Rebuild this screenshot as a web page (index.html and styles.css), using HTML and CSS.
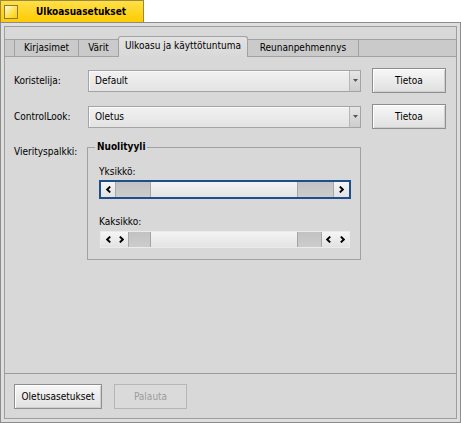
FILE: index.html
```html
<!DOCTYPE html>
<html lang="fi">
<head>
<meta charset="utf-8">
<title>Ulkoasuasetukset</title>
<link rel="stylesheet" href="styles.css">
</head>
<body>
<div class="window">
  <div class="titletab">
    <span class="closebox"></span>
    <span class="title">Ulkoasuasetukset</span>
  </div>
  <div class="frame">
    <div class="content">
      <div class="tabview">
        <div class="tabbar">
          <div class="stub"></div>
          <div class="tab w1">Kirjasimet</div>
          <div class="tab w2">Värit</div>
          <div class="tab sel w3">Ulkoasu ja käyttötuntuma</div>
          <div class="tab w4">Reunanpehmennys</div>
          <div class="fill"></div>
        </div>
        <div class="panel">
          <div class="form">
            <span class="lbl">Koristelija:</span>
            <div class="dropdown">
              <span class="value">Default</span>
              <span class="ddarrow"><svg width="5" height="3" viewBox="0 0 5 3"><path d="M0 0H5L2.5 3Z" fill="#555"/></svg></span>
            </div>
            <button class="btn info">Tietoa</button>

            <span class="lbl">ControlLook:</span>
            <div class="dropdown">
              <span class="value">Oletus</span>
              <span class="ddarrow"><svg width="5" height="3" viewBox="0 0 5 3"><path d="M0 0H5L2.5 3Z" fill="#555"/></svg></span>
            </div>
            <button class="btn info">Tietoa</button>

            <span class="lbl top">Vierityspalkki:</span>
            <fieldset class="group">
              <legend>Nuolityyli</legend>
              <div class="sblabel">Yksikkö:</div>
              <div class="sbwrap focus">
                <div class="scrollbar">
                  <span class="arrow a15 rb"><svg width="5" height="7" viewBox="0 0 5 7"><path d="M4.2 0.6 1.2 3.5 4.2 6.4" fill="none" stroke="#000" stroke-width="1.9"/></svg></span>
                  <span class="trough t34"></span>
                  <span class="thumb"></span>
                  <span class="trough grow"></span>
                  <span class="arrow a16 lb"><svg width="5" height="7" viewBox="0 0 5 7"><path d="M0.8 0.6 3.8 3.5 0.8 6.4" fill="none" stroke="#000" stroke-width="1.9"/></svg></span>
                </div>
              </div>
              <div class="sblabel second">Kaksikko:</div>
              <div class="sbwrap plain">
                <div class="scrollbar">
                  <span class="arrow a14"><svg width="5" height="7" viewBox="0 0 5 7"><path d="M4.2 0.6 1.2 3.5 4.2 6.4" fill="none" stroke="#000" stroke-width="1.9"/></svg></span>
                  <span class="arrow a14 rb"><svg width="5" height="7" viewBox="0 0 5 7"><path d="M0.8 0.6 3.8 3.5 0.8 6.4" fill="none" stroke="#000" stroke-width="1.9"/></svg></span>
                  <span class="trough t21"></span>
                  <span class="thumb"></span>
                  <span class="trough grow"></span>
                  <span class="arrow a14 lb"><svg width="5" height="7" viewBox="0 0 5 7"><path d="M4.2 0.6 1.2 3.5 4.2 6.4" fill="none" stroke="#000" stroke-width="1.9"/></svg></span>
                  <span class="arrow a14"><svg width="5" height="7" viewBox="0 0 5 7"><path d="M0.8 0.6 3.8 3.5 0.8 6.4" fill="none" stroke="#000" stroke-width="1.9"/></svg></span>
                </div>
              </div>
            </fieldset>
          </div>
        </div>
      </div>
      <div class="footer">
        <button class="btn wide">Oletusasetukset</button>
        <button class="btn revert" disabled>Palauta</button>
      </div>
    </div>
  </div>
</div>
</body>
</html>
```
FILE: styles.css
```css
* { box-sizing: border-box; }

body {
  margin: 0;
  background: #ffffff;
  font-family: "DejaVu Sans Condensed", "DejaVu Sans", sans-serif;
  font-stretch: condensed;
  font-size: 10px;
  color: #000;
}

.window {
  width: 461px;
}

/* Title tab */
.titletab {
  width: 144px;
  height: 22px;
  display: flex;
  align-items: center;
  border: 1px solid #9c8a3c;
  border-bottom: none;
  background: linear-gradient(#ffe04a, #ffcb00);
}

.closebox {
  width: 14px;
  height: 14px;
  margin-left: 3px;
  border: 1px solid #8f7c34;
  background: linear-gradient(135deg, #fffbe6 0%, #ffe566 45%, #ffcb00 100%);
}

.title {
  margin-left: 18px;
  font-weight: bold;
  white-space: nowrap;
}

/* Window frame */
.frame {
  border: 1px solid #8c8c8c;
  background: #dedede;
  padding: 3px;
}

.content {
  height: 393px;
  border: 1px solid #9e9e9e;
  background: #d8d8d8;
  display: flex;
  flex-direction: column;
}

/* Tab view */
.tabview {
  flex: 1;
  display: flex;
  flex-direction: column;
  padding-top: 9px;
}

.tabbar {
  display: flex;
  align-items: flex-end;
  height: 21px;
}

.stub, .tab, .fill {
  height: 18px;
  border-top: 1px solid #a2a2a2;
  border-bottom: 1px solid #a2a2a2;
  background: #cacaca;
}

.stub { width: 9px; }
.fill { flex: 1; border-left: 1px solid #a2a2a2; }

.tab {
  border-left: 1px solid #a2a2a2;
  text-align: center;
  line-height: 15px;
  white-space: nowrap;
}

.tab.sel {
  height: 21px;
  border: 1px solid #a2a2a2;
  border-bottom: none;
  border-radius: 3px 3px 0 0;
  background: linear-gradient(#e2e2e2, #d8d8d8);
  line-height: 17px;
}

.sel + .tab { border-left: none; }

.w1 { width: 64px; }
.w2 { width: 40px; }
.w3 { width: 130px; }
.w4 { width: 110px; }

.panel {
  flex: 1;
  padding: 11px 0 0 9px;
}

.form {
  display: grid;
  grid-template-columns: 74px 273px 85px;
  row-gap: 11px;
  align-items: center;
}

.lbl {
  line-height: 14px;
  white-space: nowrap;
}

.lbl.top {
  align-self: start;
  margin-top: 5px;
}

.dropdown {
  height: 22px;
  display: flex;
  align-items: center;
  border: 1px solid #a4a4a4;
  background: linear-gradient(#f1f1f1, #e3e3e3);
  box-shadow: inset 1px 1px 0 #fafafa;
}

.dropdown .value {
  flex: 1;
  padding-left: 6px;
}

.ddarrow {
  width: 11px;
  align-self: stretch;
  display: flex;
  align-items: center;
  justify-content: center;
  border-left: 1px solid #b6b6b6;
  background: linear-gradient(#e6e6e6, #cdcdcd);
}

.btn {
  height: 25px;
  padding: 0;
  border: 1px solid #8e8e8e;
  background: linear-gradient(#f7f7f7, #e0e0e0);
  box-shadow: inset 1px 1px 0 #ffffff, inset -1px -1px 0 #cfcfcf;
  font: inherit;
  color: #000;
}

.btn.info {
  width: 74px;
  justify-self: end;
}

.btn.wide { width: 88px; }

.btn.revert {
  width: 73px;
  border-color: #b6b6b6;
  background: #dadada;
  box-shadow: none;
  color: #9c9c9c;
}

/* Group box */
.group {
  align-self: start;
  margin: 0 0 0 -1px;
  min-width: 0;
  border: 1px solid #a2a2a2;
  padding: 11px 9px 10px 11px;
}

.group legend {
  margin-left: -4px;
  padding: 0 2px;
  font-weight: bold;
  line-height: 14px;
}

.sblabel {
  line-height: 14px;
}

.sblabel.second {
  margin-top: 16px;
}

.sbwrap {
  margin-top: 1px;
  border: 2px solid transparent;
}

.sbwrap.focus {
  border-color: #1f4e8c;
}

.sbwrap.plain .scrollbar {
  box-shadow: 0 0 0 1px #ebebeb;
}

.scrollbar {
  display: flex;
  height: 15px;
  background: #c8c8c8;
}

.arrow {
  display: flex;
  align-items: center;
  justify-content: center;
  background: linear-gradient(#f5f5f5, #e2e2e2);
}

.a14 { width: 14px; }
.a15 { width: 15px; }
.a16 { width: 16px; }

.rb { border-right: 1px solid #a8a8a8; }
.lb { border-left: 1px solid #a8a8a8; }

.trough {
  background: linear-gradient(#c2c2c2, #cccccc);
}

.t34 { width: 34px; }
.t21 { width: 21px; }
.grow { flex: 1; }

.thumb {
  width: 148px;
  border-left: 1px solid #a4a4a4;
  border-right: 1px solid #a4a4a4;
  background: linear-gradient(#f3f3f3, #e4e4e4);
}

/* Footer */
.footer {
  height: 45px;
  border-top: 1px solid #9a9a9a;
  padding: 10px 0 0 9px;
  display: flex;
  align-items: flex-start;
  gap: 12px;
}
```
